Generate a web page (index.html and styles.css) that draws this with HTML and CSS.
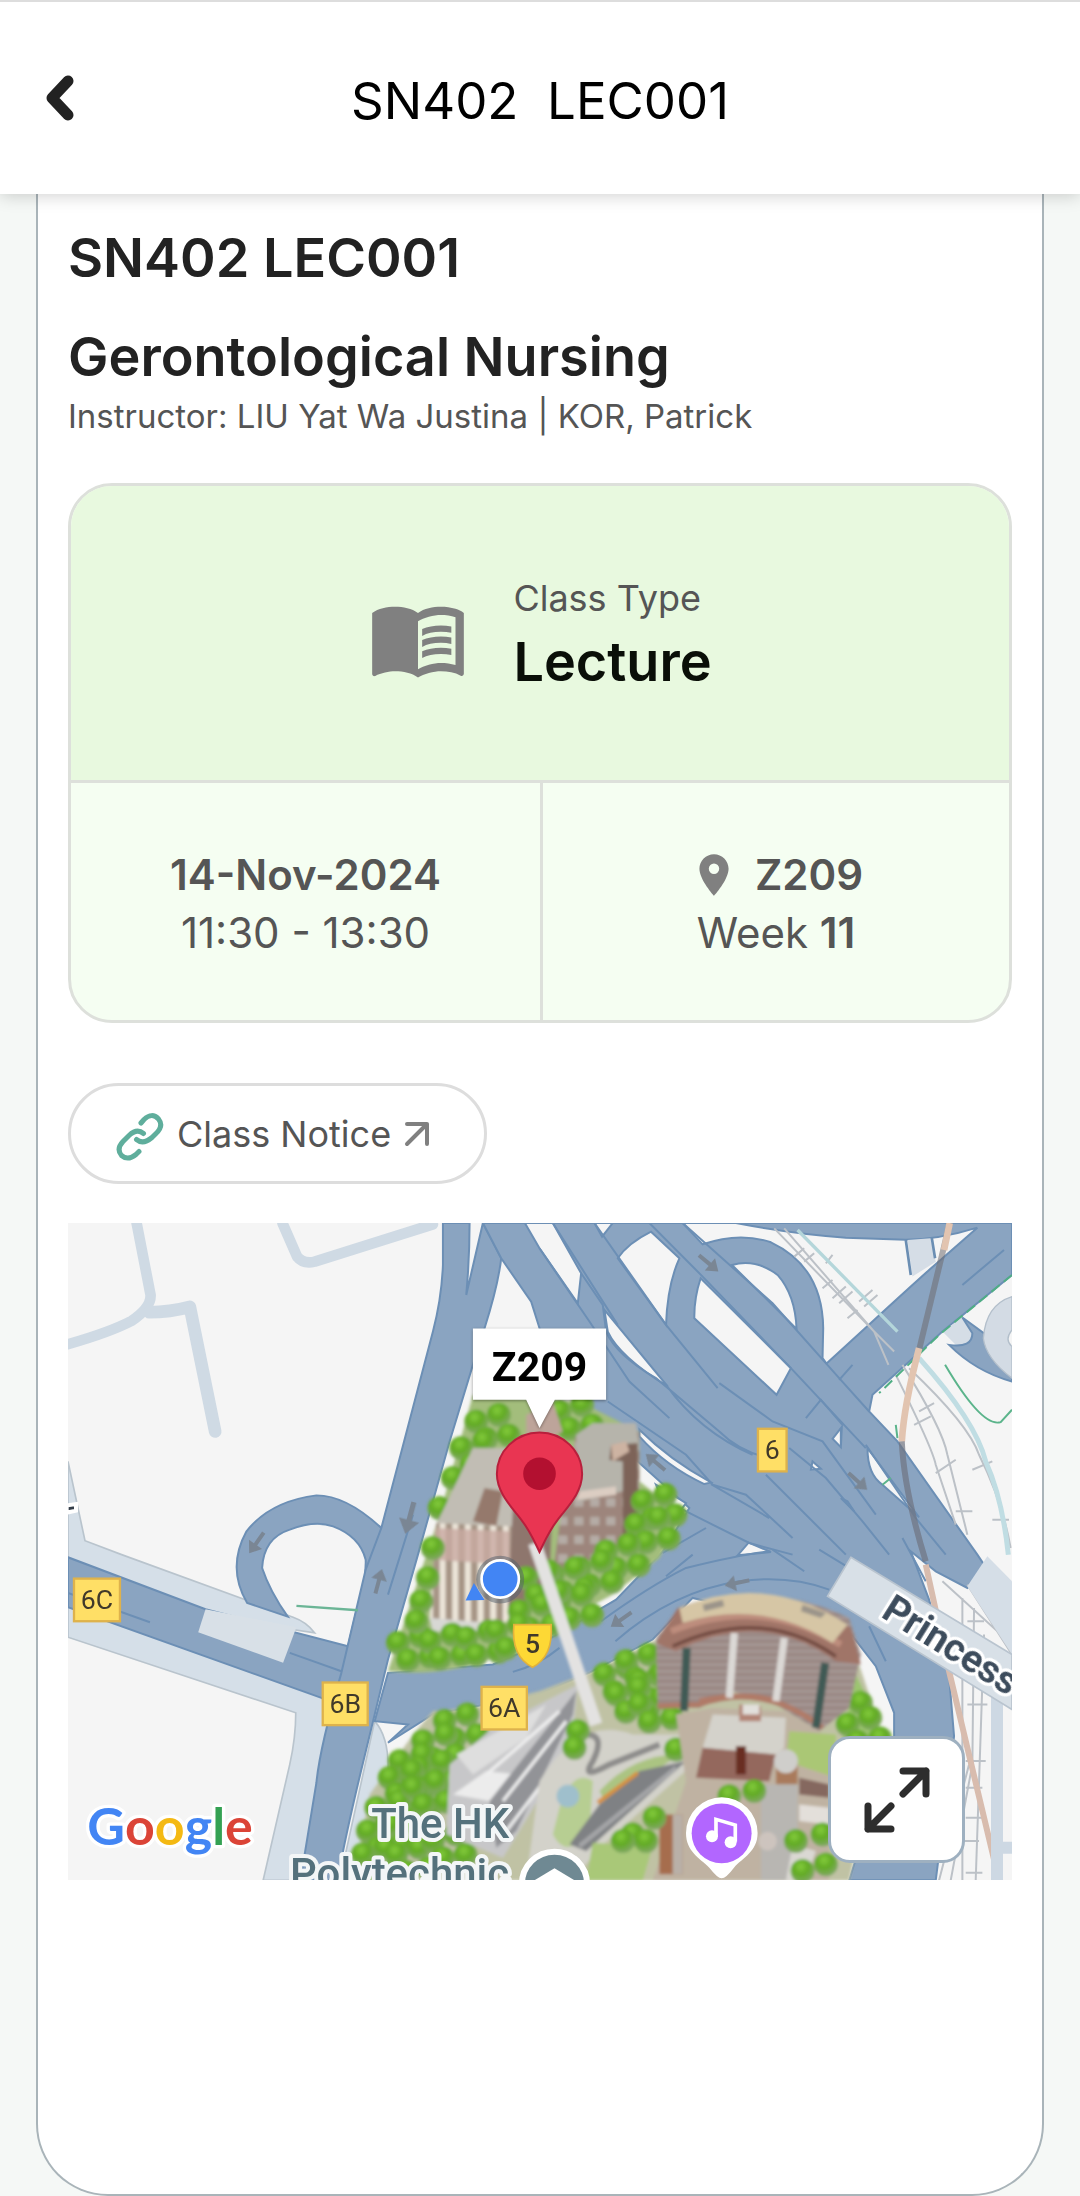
FILE: index.html
```html
<!DOCTYPE html>
<html lang="en">
<head>
    <meta charset="UTF-8">
    <meta name="viewport" content="width=device-width, initial-scale=1.0">
    <title>SN402 LEC001</title>
    <link rel="stylesheet" href="styles.css">
</head>
<body>

    <header class="topbar">
        <button class="back" type="button" aria-label="Back">
            <svg viewBox="0 0 30 46"><path d="M23 6 L7 23 L23 40"/></svg>
        </button>
        <div class="topbar-title">SN402&nbsp; LEC001</div>
    </header>

    <main class="sheet">
        <h1>SN402 LEC001</h1>
        <h2>Gerontological Nursing</h2>
        <p class="instructor">Instructor: LIU Yat Wa Justina | KOR, Patrick</p>

        <section class="info">
            <div class="info-type">
                <svg class="book" viewBox="0 0 24 24">
                    <path d="M21 5c-1.11-.35-2.33-.5-3.5-.5-1.95 0-4.05.4-5.5 1.5-1.45-1.1-3.55-1.5-5.5-1.5S2.45 4.9 1 6v14.65c0 .25.25.5.5.5.1 0 .15-.05.25-.05C3.1 20.45 5.05 20 6.5 20c1.95 0 4.05.4 5.5 1.5 1.35-.85 3.8-1.5 5.5-1.5 1.65 0 3.35.3 4.75 1.05.1.05.15.05.25.05.25 0 .5-.25.5-.5V6c-.6-.45-1.25-.75-2-1zm0 13.5c-1.1-.35-2.3-.5-3.5-.5-1.7 0-4.15.65-5.5 1.5V8c1.35-.85 3.8-1.5 5.5-1.5 1.2 0 2.4.15 3.5.5v11.5z"/>
                    <path d="M17.5 10.5c.88 0 1.73.09 2.5.26V9.24c-.79-.15-1.64-.24-2.5-.24-1.7 0-3.24.29-4.5.83v1.66c1.13-.64 2.7-.99 4.5-.99zM13 12.49v1.66c1.13-.64 2.7-.99 4.5-.99.88 0 1.73.09 2.5.26V11.9c-.79-.15-1.64-.24-2.5-.24-1.7 0-3.24.3-4.5.83zM17.5 14.33c-1.7 0-3.24.29-4.5.83v1.66c1.13-.64 2.7-.99 4.5-.99.88 0 1.73.09 2.5.26v-1.52c-.79-.16-1.64-.24-2.5-.24z"/>
                </svg>
                <div>
                    <div class="label">Class Type</div>
                    <div class="type-name">Lecture</div>
                </div>
            </div>
            <div class="info-cells">
                <div class="cell">
                    <div class="line"><strong>14-Nov-2024</strong></div>
                    <div class="line">11:30 - 13:30</div>
                </div>
                <div class="cell">
                    <div class="line">
                        <svg class="place" viewBox="0 0 24 24"><path d="M12 2C8.13 2 5 5.13 5 9c0 5.25 7 13 7 13s7-7.75 7-13c0-3.87-3.13-7-7-7zm0 9.5a2.5 2.5 0 0 1 0-5 2.5 2.5 0 0 1 0 5z"/></svg>
                        <strong>Z209</strong>
                    </div>
                    <div class="line">Week&nbsp;<strong>11</strong></div>
                </div>
            </div>
        </section>

        <a class="notice" href="#">
            <svg class="link-icon" viewBox="0 0 48 48">
                <path d="M25 10 L28 6.500 Q36 -1 42.500 6 Q48 13 40 20.500 L36 24.500 Q27 32 20.500 26.500"/>
                <path d="M27.500 20.500 Q21 15 13 22.500 L7 28.500 Q0 36 5.500 42.500 Q12 48 20 41.500 L23 38.500"/>
            </svg>
            <span>Class Notice</span>
            <svg class="out-icon" viewBox="0 0 26 26"><path d="M3 3 H23 V23 M23 3 L3 23"/></svg>
        </a>

        <div class="map">
            <svg class="map-canvas" viewBox="24 24 2835 1974">
                <defs>
                    <radialGradient id="leaf" cx="42%" cy="32%" r="65%">
                        <stop offset="0" stop-color="#84cc3c"/>
                        <stop offset=".5" stop-color="#62ab24"/>
                        <stop offset="1" stop-color="#7fa860"/>
                    </radialGradient>
                    <circle id="tree" r="36" fill="url(#leaf)"/>
                    <g id="grove">
                        <use href="#tree" x="0" y="0"/><use href="#tree" x="68" y="-20"/><use href="#tree" x="30" y="52"/><use href="#tree" x="98" y="42"/>
                    </g>
                    <path id="arrow" d="M-38 -6 H5 V-24 L38 0 L5 24 V6 H-38z" fill="#7a8694"/>
                    <pattern id="bricks" width="22" height="60" patternUnits="userSpaceOnUse">
                        <rect width="22" height="60" fill="#9a8884"/>
                        <path d="M0 10 H22 M0 30 H22 M0 50 H22" stroke="#aa9d9b" stroke-width="6"/>
                    </pattern>
                    <pattern id="piers" width="38" height="60" patternUnits="userSpaceOnUse">
                        <rect width="38" height="60" fill="#a69485"/>
                        <rect width="18" height="60" fill="#ece5d9"/>
                    </pattern>
                    <pattern id="windows" width="48" height="56" patternUnits="userSpaceOnUse">
                        <rect width="48" height="56" fill="#9d857b"/>
                        <rect x="8" y="10" width="28" height="26" fill="#b5aca6"/>
                    </pattern>
                    <filter id="soft" x="-5%" y="-5%" width="110%" height="110%"><feGaussianBlur stdDeviation="5"/></filter>
                </defs>

                <rect x="24" y="24" width="2835" height="1974" fill="#f5f5f5"/>

                <!-- side streets -->
                <g class="street">
                    <path d="M230 24 L272 240 Q274 278 215 318 Q150 352 24 388"/>
                    <path d="M268 292 Q330 292 390 276 L466 650" stroke-width="38"/>
                    <path d="M668 24 L712 125 Q730 148 765 140 L1120 28"/>
                </g>

                <!-- pavements and footbridges -->
                <g class="pavement">
                    <path d="M24 740 L75 978 L185 1020 L700 1208 Q740 1222 765 1255 L400 1200 L24 1040z"/>
                    <path d="M24 1160 L785 1440 L880 1500 L725 1998 H610 L690 1650 Q708 1570 708 1495 L24 1268z"/>
                    <path d="M945 1520 Q990 1570 985 1680 L900 1998 H840z"/>
                </g>
                <path d="M20 872 L48 868 V888 L20 894z" fill="#333d49" stroke="#fff" stroke-width="12"/>

                <!-- western roads -->
                <g class="road">
                    <path d="M24 1028 L437 1184 L865 1295 L840 1480 L785 1450 L24 1178z"/>
                    <path d="M965 940 Q860 842 770 842 Q630 860 560 950 Q500 1060 562 1165 L684 1206 Q630 1130 607 1060 Q612 970 690 945 Q765 915 820 935 Q900 965 918 1035 Q920 1110 890 1190 L865 1295 H980z"/>
                    <path d="M1150 24 V150 Q1146 250 1120 350 L965 940 L918 1065 L845 1375 Q780 1600 770 1705 L722 1998 H833 Q860 1850 910 1645 L985 1335 L1075 1020 L1170 680 L1240 450 L1275 340 Q1316 210 1325 130 L1270 24 L1220 240 Q1230 130 1230 24z"/>
                </g>
                <path d="M437 1184 L710 1238 L670 1345 L415 1253z" fill="#d8e0e7"/>

                <!-- interchange -->
                <path class="road" d="M1270 24 H2859 V180 L2650 350 L2440 540 L2430 590 L2515 680 L2755 1020 L2785 1065 L2725 1120 L2630 1070 L2555 1010 L2610 1155 L2670 1385 L2685 1565 L2630 1998 H2370 L2505 1565 V1495 L2450 1355 L2380 1265 L1900 1150 L1780 1275 L1590 1375 L1440 1440 L1120 1500 L985 1585 L1045 1530 L945 1520 L985 1375 L1300 1350 L1440 1290 L1670 1155 L1810 1010 L1890 880 L1740 745 L1560 570 L1440 340 L1415 260 L1325 130z"/>
                <g transform="translate(1440 0)">
                    <g class="island">
                        <path d="M-44 24 H40 L125 175 L115 265 L0 100z"/>
                        <path d="M165 24 H220 L188 65z"/>
                        <path d="M235 130 Q265 85 335 50 L420 130 Q384 210 380 330z"/>
                        <path d="M484 190 L755 460 L712 540 L465 310 Q464 250 484 190z"/>
                        <path d="M578 150 Q650 130 715 180 Q768 240 772 342z"/>
                        <path d="M430 24 L490 88 Q600 50 695 82 Q850 155 852 340 L850 430 L862 446 L1000 320 Q1070 255 1170 165 L1315 38 Q1200 74 1100 74 L920 68 Q750 55 590 24z"/>
                        <path d="M195 285 L385 515 Q240 425 205 350z"/>
                        <path d="M300 645 Q390 735 515 803 L495 808 Q380 755 300 665z"/>
                        <path d="M880 672 L908 636 L905 697z"/>
                        <path d="M815 765 L820 740 L845 762z"/>
                        <path d="M985 700 L1140 908 L1030 810 Q985 780 985 700z"/>
                        <path d="M905 850 L925 860 L945 890z"/>
                        <path d="M595 1022 L628 984 L695 1012z"/>
                        <path d="M440 865 L350 810 L380 880 L400 920z"/>
                    </g>
                    <g class="seam">
                        <path d="M40 24 L235 330 M165 24 L380 330 L535 520 M330 24 L490 185 L755 460 L980 700 M430 24 L700 265 L900 490 L990 590 M0 100 L150 320 L270 500 L390 610"/>
                        <path d="M125 175 L190 270 L200 350 Q230 420 350 490 L540 650 Q600 710 690 730 M380 510 Q480 650 640 720 M540 505 L700 620 L850 680 L1010 900"/>
                        <path d="M205 560 L440 720 L520 810 L620 840 L760 970 M515 808 L690 910 M680 780 L920 1020 M750 700 L860 790 L970 920 L1050 1020 M800 610 L845 555 L910 630 M905 640 V690 M980 690 L1130 910 L1220 1020 M900 495 L940 450 M1270 210 L1395 105 M430 885 L630 985 L760 1020 M370 1015 L500 940"/>
                        <path d="M185 1220 Q330 1115 440 1060 Q600 1020 690 1010 M228 1280 Q400 1130 600 1100 Q750 1080 870 1125 M380 1085 L460 1020 M990 1235 L1040 1340 M700 1005 L795 1070 M840 1005 L930 1060 M1090 970 L1160 1100"/>
                    </g>
                    <g fill="#d5dde6">
                        <path d="M1105 75 L1175 70 L1190 140 L1120 185z"/>
                        <path d="M1210 350 L1270 308 Q1310 340 1300 375 Q1280 405 1250 390z"/>
                    </g>
                    <path d="M1100 75 L1115 180 M1178 68 L1188 130" stroke="#6b8eb3" stroke-width="8"/>
                    <path class="road" d="M1270 308 L1355 370 L1419 480 V500 Q1310 470 1230 390 Q1300 400 1300 355z"/>
                    <path d="M1419 245 Q1340 270 1333 370 Q1340 430 1419 490 V395 Q1395 375 1419 345z" fill="#d3dbe4" stroke="#b3bfcb" stroke-width="4"/>

                    <!-- railway -->
                    <g class="rail">
                        <path d="M705 40 L1005 350 L1065 410 M735 40 L1005 350 L1048 450 M1070 480 Q1180 700 1190 750 L1250 930 M1090 450 Q1210 640 1225 720 L1285 960 M1110 460 Q1290 630 1320 720 Q1390 860 1415 1000"/>
                        <path d="M765 125 l30 -25 M795 140 l30 -25 M850 220 l30 -25 M880 250 l40 -35 M900 265 l40 -35 M925 310 l30 -25 M860 145 l20 -25 M960 260 l40 -35 M975 275 l40 -35 M1125 630 l50 -25 M1140 590 l45 -25 M1190 775 l60 -40 M1300 765 l60 -25 M1250 890 h50 M1360 915 h50"/>
                        <path d="M1270 1150 V1998 M1305 1180 L1300 1650 L1235 1998 M1335 1260 L1310 1998 M1200 1998 L1290 1650 M1210 1100 L1419 1290 M1285 1110 L1419 1320" />
                        <path d="M1285 1220 h50 M1280 1360 h60 M1285 1470 h60 M1280 1640 h60 M1280 1720 h50 M1280 1810 h60 M1270 1880 h50 M1280 1975 h50"/>
                    </g>
                    <g fill="none">
                        <path d="M775 45 L1075 350" stroke="#b4d6da" stroke-width="10"/>
                        <path d="M1140 430 Q1310 620 1340 740 Q1390 850 1408 1020" stroke="#c0dde3" stroke-width="15"/>
                        <path d="M1419 180 L1200 360 L1020 535" stroke="#4fae84" stroke-width="6" stroke-dasharray="32 16"/>
                        <path d="M1218 450 Q1330 640 1385 622 L1419 585 M1070 630 L1075 670 M1030 810 L1055 790" stroke="#5bb48b" stroke-width="6"/>
                        <path d="M1232 24 L1140 405" stroke="#6f6b70" stroke-opacity=".55" stroke-width="18"/>
                        <path d="M1232 24 L1215 105 M1140 400 Q1095 570 1088 680" stroke="#e2c4b0" stroke-width="20"/>
                        <path d="M1088 680 Q1095 830 1160 1040" stroke="#6f7380" stroke-opacity=".7" stroke-width="18"/>
                        <path d="M1160 1050 L1230 1370 L1380 1998" stroke="#d8bcae" stroke-width="18"/>
                    </g>
                    <path d="M1345 1025 L1419 1100 V1320 L1285 1115z" fill="#d5dee7"/>
                    <path d="M1374 1440 V1998 M1384 1900 H1419" stroke="#cdd8e3" stroke-width="36"/>
                    <path d="M935 1028 L1419 1320 V1485 L865 1145z" fill="#d8e0e7" stroke="#b9c4cf" stroke-width="5"/>
                </g>

                <path d="M710 1174 L895 1187" stroke="#6bb596" stroke-width="7"/>
                <path class="seam" d="M24 1135 L270 1223 M690 1315 L845 1370 M1060 900 L985 1140 M1360 1372 Q1440 1350 1500 1300"/>

                <!-- campus imagery -->
                <g filter="url(#soft)">
                    <path d="M1240 540 L1560 560 L1740 650 L1740 800 L1870 900 L1800 1030 L1660 1140 L1480 1235 L1330 1320 Q1160 1390 985 1370 L1140 900z" fill="#a3bd7c"/>
                    <use href="#grove" x="1250" y="620"/><use href="#grove" x="1500" y="590"/><use href="#grove" x="1205" y="700"/><use href="#tree" x="1180" y="790"/><use href="#tree" x="1140" y="880"/>
                    <path d="M1240 700 H1340 L1470 790 L1380 1000 L1310 1215 H1110 L1130 930z" fill="#c1bdb4"/>
                    <path d="M1275 820 L1330 830 L1310 935 L1240 920z" fill="#95796c"/>
                    <path d="M1130 925 L1360 935 L1400 1200 L1300 1235 L1110 1210z" fill="url(#piers)"/>
                    <path d="M1360 880 L1480 840 L1470 1110 L1375 1215 L1345 1180z" fill="#8e766d"/>
                    <path d="M1128 940 L1350 950 V1050 L1115 1035z" fill="#c9aaa1" fill-opacity=".8"/>
                    <path d="M1110 1210 L1290 1225 L1280 1250 H1120z" fill="#d8d8d4"/>
                    <path d="M1400 600 L1480 560 L1510 650 L1400 700z" fill="#bda49a"/>
                    <path d="M1550 660 L1740 650 V910 L1680 1000 L1480 1080 L1510 850z" fill="url(#windows)"/>
                    <path d="M1550 660 L1600 625 H1730 L1740 700 L1690 830 L1560 860z" fill="#b6b4ab"/>
                    <path d="M1655 690 L1735 685 V960 L1690 980 V740 L1650 735z" fill="#7d6358"/>
                    <path d="M1655 690 L1700 680 L1710 710 L1660 740z" fill="#cdb3a2"/>
                    <path d="M1560 830 L1670 815 V840 L1550 855z" fill="#dccdc2"/>

                    <use href="#grove" x="1750" y="860"/><use href="#grove" x="1730" y="930"/><use href="#grove" x="1640" y="1010"/><use href="#grove" x="1560" y="1060"/><use href="#grove" x="1480" y="1080"/><use href="#grove" x="1500" y="1160"/><use href="#grove" x="1400" y="1090"/><use href="#grove" x="1380" y="1190"/>
                    <use href="#grove" x="1015" y="1285"/><use href="#grove" x="1110" y="1280"/><use href="#grove" x="1220" y="1270"/><use href="#grove" x="1310" y="1250"/><use href="#tree" x="1085" y="1160"/><use href="#tree" x="1105" y="1090"/><use href="#tree" x="1120" y="1000"/><use href="#tree" x="1070" y="1220"/>

                    <!-- southern half of the campus -->
                    <path d="M1120 1490 L1240 1480 L1440 1430 L1600 1370 L1780 1280 L1900 1230 H2360 L2400 1350 L2450 1500 L2470 1570 L2370 1998 H880 L930 1740 L1060 1560z" fill="#c0c2a4"/>
                    <use href="#grove" x="1155" y="1520"/><use href="#grove" x="1090" y="1580"/><use href="#grove" x="1020" y="1640"/><use href="#grove" x="1080" y="1660"/><use href="#grove" x="990" y="1690"/><use href="#grove" x="1010" y="1740"/><use href="#grove" x="950" y="1780"/><use href="#grove" x="1060" y="1720"/><use href="#grove" x="925" y="1850"/><use href="#grove" x="910" y="1920"/><use href="#grove" x="1010" y="1920"/><use href="#grove" x="1120" y="1880"/>
                    <path d="M1170 1650 L1300 1540 L1555 1410 L1540 1560 L1440 1750 L1330 1930 L1160 1860z" fill="#c7c7c9"/>
                    <path d="M1180 1740 L1280 1670 L1380 1680 L1290 1760z" fill="#ececec"/>
                    <path d="M1190 1620 L1460 1470 L1400 1570 L1240 1680z" fill="#dedede"/>
                    <path d="M1290 1760 L1550 1430 L1540 1500 L1370 1850 L1310 1900z" fill="#929397"/>
                    <path d="M1280 1680 L1500 1490 M1330 1760 L1520 1520 M1340 1850 L1500 1640" stroke="#f0f0f0" stroke-width="10"/>
                    <path d="M1440 1700 Q1560 1500 1720 1560 L1900 1560 V1650 L1620 1900 L1540 1998 H1400z" fill="#d3d2ca"/>
                    <path d="M1500 1780 Q1540 1660 1600 1700 L1590 1850 Q1520 1940 1480 1860z" fill="#b7ce92"/>
                    <circle cx="1525" cy="1745" r="34" fill="#9fbfcc"/>
                    <path d="M1620 1730 Q1720 1620 1860 1620 L1640 1770z" fill="#abc482"/>
                    <path d="M1620 1770 Q1720 1690 1740 1670 L1880 1640 L1580 1910 L1530 1890z" fill="#7f8184"/>
                    <path d="M1560 1895 L1850 1660" stroke="#a5a6a8" stroke-width="14"/>
                    <path d="M1615 1765 L1735 1675" stroke="#d8913f" stroke-width="12"/>
                    <path d="M1580 1560 Q1640 1560 1600 1640 Q1560 1700 1650 1650 L1800 1590" fill="none" stroke="#8d8c8b" stroke-width="18"/>
                    <path d="M1600 1885 L1780 1895 L1750 1998 H1580z" fill="#a9c878"/>
                    <use href="#grove" x="1635" y="1380"/><use href="#grove" x="1700" y="1340"/><use href="#grove" x="1740" y="1400"/><use href="#grove" x="1670" y="1440"/><use href="#grove" x="1740" y="1470"/><use href="#tree" x="1555" y="1550"/><use href="#tree" x="1545" y="1600"/><use href="#tree" x="1850" y="1605"/>
                    <path d="M1425 985 L1610 1530" stroke="#e3e2e1" stroke-width="38"/>

                    <!-- auditorium -->
                    <path d="M2390 1380 L2450 1500 L2470 1570 L2350 1570z" fill="#9cc470"/>
                    <use href="#tree" x="2405" y="1465"/><use href="#grove" x="2365" y="1530"/>
                    <path d="M1790 1270 L1860 1180 Q2120 1090 2370 1210 L2405 1320 L2370 1480 L2280 1550 L2150 1470 L2020 1430 L1920 1480 L1795 1475z" fill="url(#bricks)"/>
                    <path d="M1795 1475 L1920 1470 Q2110 1400 2290 1540 M1920 1460 Q2060 1430 2150 1460" fill="none" stroke="#b07a68" stroke-width="16"/>
                    <path d="M1790 1285 L1855 1180 Q2110 1080 2375 1240 L2405 1350 L2330 1340 Q2110 1180 1850 1310z" fill="#a07468"/>
                    <path d="M1835 1250 Q2100 1140 2345 1290" fill="none" stroke="#bd8d7d" stroke-width="20"/>
                    <path d="M1840 1295 Q2110 1170 2330 1325" fill="none" stroke="#6f4a41" stroke-width="10"/>
                    <path d="M1860 1180 Q2120 1070 2365 1230 L2320 1285 Q2110 1150 1870 1225z" fill="#d6c6a5"/>
                    <path d="M1930 1170 L1990 1155 L1995 1175 L1935 1190z M2230 1170 L2300 1195 L2285 1210 L2225 1190z" fill="#9b948a"/>
                    <path d="M1882 1300 L1874 1490 M2298 1345 L2270 1540" stroke="#3f5a55" stroke-width="24"/>
                    <path d="M2025 1255 L2010 1450 M2175 1270 L2150 1460" stroke="#dcd9d6" stroke-width="22"/>

                    <!-- lower buildings -->
                    <path d="M1850 1500 L1960 1480 L2180 1490 L2310 1570 V1998 H1780 L1880 1700z" fill="#bfb2a2"/>
                    <path d="M2190 1550 L2330 1560 V1690 L2180 1640z" fill="#aac774"/>
                    <path d="M1960 1500 L2180 1510 L2175 1600 L2150 1620 L1930 1600z" fill="#d4d2cb"/>
                    <path d="M2040 1470 L2105 1475 V1520 H2040z" fill="#b28476"/><path d="M2050 1470 h50 v30 h-50z" fill="#e2e0dc"/>
                    <path d="M1930 1600 L2150 1620 L2130 1700 L1910 1690z" fill="#94685d"/>
                    <path d="M2030 1595 h30 v85 h-30z" fill="#692d24"/>
                    <path d="M2150 1640 h65 v70 h-65z" fill="#a97a5b"/><circle cx="2180" cy="1640" r="36" fill="#cfcecb"/>
                    <path d="M2105 1710 h110 v288 h-110z" fill="#b8b6b2"/>
                    <path d="M2220 1690 L2310 1710 V1750 L2220 1740z" fill="#85685f"/>
                    <path d="M2220 1770 L2310 1780 V1830 L2220 1820z" fill="#e3dfda"/>
                    <path d="M1800 1800 h70 v180 h-70z" fill="#a66d4e"/><path d="M1840 1800 h30 v180 h-30z" fill="#b9b0a8"/>
                    <circle cx="2125" cy="1880" r="28" fill="#cdc4be"/>
                    <path d="M2200 1890 L2270 1910 L2240 1998 H2180z" fill="#dad8d3"/>
                    <use href="#tree" x="1720" y="1860"/><use href="#tree" x="1760" y="1880"/><use href="#tree" x="1690" y="1880"/><use href="#tree" x="1785" y="1810"/><use href="#tree" x="2010" y="1745"/><use href="#tree" x="2085" y="1730"/><use href="#tree" x="2210" y="1880"/><use href="#tree" x="2290" y="1860"/><use href="#tree" x="2230" y="1970"/><use href="#tree" x="2300" y="1950"/>
                </g>

                <!-- traffic directions -->
                <use href="#arrow" transform="translate(1050 910) rotate(105) scale(1.3)"/>
                <use href="#arrow" transform="translate(590 985) rotate(125)"/>
                <use href="#arrow" transform="translate(957 1100) rotate(-75)"/>
                <use href="#arrow" transform="translate(1948 145) rotate(40)"/>
                <use href="#arrow" transform="translate(2396 800) rotate(42)"/>
                <use href="#arrow" transform="translate(1788 742) rotate(220)"/>
                <use href="#arrow" transform="translate(2033 1105) rotate(168)"/>
                <use href="#arrow" transform="translate(1685 1215) rotate(145)"/>

                <!-- road numbers -->
                <g class="shield">
                    <rect x="2096" y="642" width="86" height="128"/><text x="2139" y="733">6</text>
                    <rect x="42" y="1092" width="138" height="128"/><text x="111" y="1184">6C</text>
                    <rect x="789" y="1404" width="135" height="128"/><text x="857" y="1496">6B</text>
                    <rect x="1266" y="1417" width="136" height="128"/><text x="1334" y="1508">6A</text>
                    <path d="M1363 1230 H1475 Q1482 1325 1419 1358 Q1354 1325 1363 1230z" fill="#fdd835" stroke="#e2b23a" stroke-width="5"/><text class="route" x="1419" y="1315">5</text>
                </g>

                <!-- labels -->
                <text class="street-name" transform="translate(2462 1205) rotate(32)">Princess</text>
                <text class="campus-name" x="1349" y="1870">The HK</text>
                <text class="campus-name" x="1349" y="2020">Polytechnic</text>
                <g>
                    <circle cx="1485" cy="2010" r="98" fill="#6f8993" stroke="#fff" stroke-width="18"/>
                    <path d="M1425 1998 L1485 1962 L1545 1998z" fill="#fff"/>
                </g>
                <g>
                    <path d="M1987 1992 Q1975 1992 1950 1960 C1920 1930 1880 1912 1880 1856 A107 107 0 0 1 2095 1856 C2095 1912 2050 1930 2024 1960 Q2000 1992 1987 1992z" fill="#fff"/>
                    <circle cx="1987" cy="1857" r="90" fill="#b266ff"/>
                    <path d="M1970 1866 V1815 L2028 1832 V1882" fill="none" stroke="#fff" stroke-width="11"/>
                    <circle cx="1958" cy="1866" r="18" fill="#fff"/><circle cx="2014" cy="1884" r="18" fill="#fff"/>
                </g>

                <!-- current location -->
                <circle cx="1322" cy="1095" r="72" fill="#53606b" fill-opacity=".5"/>
                <path d="M1243 1105 L1218 1158 L1275 1156z" fill="#4285f4"/>
                <circle cx="1322" cy="1093" r="56" fill="#4285f4" stroke="#fff" stroke-width="8"/>

                <!-- room marker -->
                <path d="M1440 1012 C1420 970 1412 950 1385 915 C1350 870 1312 830 1312 778 A128 125 0 0 1 1568 778 C1568 830 1530 870 1495 915 C1468 950 1460 970 1440 1012z" fill="#e93552" stroke="#b81f3c" stroke-width="6"/>
                <circle cx="1440" cy="777" r="49" fill="#b31030"/>
                <path class="bubble" d="M1240 341 H1640 V555 H1486 L1440 640 L1400 555 H1240z"/>
                <text class="bubble-text" x="1440" y="498">Z209</text>

                <text class="google" x="82" y="1891"><tspan fill="#4285f4">G</tspan><tspan fill="#db4437">o</tspan><tspan fill="#f4b913">o</tspan><tspan fill="#4285f4">g</tspan><tspan fill="#34a153">l</tspan><tspan fill="#db4437">e</tspan></text>
            </svg>

            <button class="expand" type="button" aria-label="Expand map">
                <svg viewBox="0 0 66 66"><path d="M39 4 H62 V27 M62 4 L39 27 M4 39 V62 H27 M4 62 L27 39"/></svg>
            </button>
        </div>
    </main>

</body>
</html>
```
FILE: styles.css
```css
* {
    box-sizing: border-box;
}

body {
    margin: 0;
    min-height: 100vh;
    display: flex;
    flex-direction: column;
    background: #f5f8f6;
    font-family: "Inter", "Roboto", sans-serif;
    font-optical-sizing: none;
    color: #555;
}

/* header */
.topbar {
    display: grid;
    grid-template-columns: 120px 1fr 120px;
    align-items: center;
    height: 194px;
    padding-top: 6px;
    border-top: 2px solid #ddd;
    background: #fff;
    box-shadow: 0 2px 16px rgba(0, 0, 0, 0.18);
    position: relative;
}

.back {
    justify-self: start;
    padding: 0 45px 6px;
    border: none;
    background: none;
    cursor: pointer;
}

.back svg {
    display: block;
    width: 30px;
    height: 46px;
    fill: none;
    stroke: #222;
    stroke-width: 11;
    stroke-linecap: round;
    stroke-linejoin: round;
}

.topbar-title {
    text-align: center;
    font-size: 51px;
    line-height: 60px;
    color: #000;
}

/* white sheet */
.sheet {
    flex: 1;
    margin: 0 36px;
    padding: 34px 30px 60px;
    border: 2px solid #a9b4b9;
    border-top: none;
    border-radius: 0 0 72px 72px;
    background: #fff;
}

h1,
h2 {
    margin: 0;
    font-size: 54px;
    line-height: 60px;
    font-weight: 600;
    color: #222;
}

h2 {
    margin-top: 39px;
}

.instructor {
    margin: 7px 0 45px;
    font-size: 33px;
    line-height: 44px;
}

/* class info card */
.info {
    border: 3px solid #dde0db;
    border-radius: 44px;
    background: #f5fef2;
    overflow: hidden;
}

.info-type {
    display: flex;
    justify-content: center;
    align-items: flex-end;
    gap: 45px;
    padding: 88px 0;
    border-bottom: 3px solid #dde0db;
    background: #e8f9df;
}

.book {
    width: 100px;
    height: 100px;
    margin-bottom: 4px;
    fill: #808080;
}

.label {
    font-size: 36px;
    line-height: 48px;
}

.type-name {
    margin-top: 10px;
    font-size: 54px;
    line-height: 60px;
    font-weight: 600;
    color: #0a0f08;
}

.info-cells {
    display: grid;
    grid-template-columns: 1fr 1fr;
}

.cell {
    padding: 63px 0 58px;
}

.cell + .cell {
    border-left: 3px solid #dde0db;
}

.line {
    display: flex;
    justify-content: center;
    align-items: center;
    font-size: 42px;
    line-height: 58px;
}

strong {
    font-weight: 600;
}

.place {
    width: 50px;
    height: 50px;
    margin-right: 16px;
    fill: #808080;
}

/* class notice link */
.notice {
    display: flex;
    align-items: center;
    width: fit-content;
    height: 101px;
    margin: 60px 0 39px;
    padding: 0 54px 0 45px;
    border: 3px solid #ddd;
    border-radius: 51px;
    font-size: 36px;
    color: #555;
    text-decoration: none;
}

.link-icon {
    width: 48px;
    height: 48px;
    margin: 6px 13px 0 0;
    fill: none;
    stroke: #5fae9c;
    stroke-width: 5;
    stroke-linecap: round;
}

.out-icon {
    width: 26px;
    height: 26px;
    margin-left: 13px;
    fill: none;
    stroke: #808080;
    stroke-width: 4;
    stroke-linecap: round;
    stroke-linejoin: round;
}

/* map */
.map {
    position: relative;
}

.map-canvas {
    display: block;
    width: 100%;
    font-family: "Roboto", sans-serif;
}

.street {
    fill: none;
    stroke: #cfdae4;
    stroke-width: 32;
    stroke-linecap: round;
    stroke-linejoin: round;
}

.pavement {
    fill: #d5dfe8;
    stroke: #b9c4cd;
    stroke-width: 5;
}

.road {
    fill: #8aa4c1;
    stroke: #6c8fb5;
    stroke-width: 6;
}

.island {
    fill: #f5f5f5;
    stroke: #6c8fb5;
    stroke-width: 6;
}

.seam {
    fill: none;
    stroke: #6c8fb5;
    stroke-width: 6;
}

.rail {
    fill: none;
    stroke: #bcc1c7;
    stroke-width: 6;
}

.shield rect {
    fill: #ffdf66;
    stroke: #deb24c;
    stroke-width: 7;
}

.shield text {
    font-size: 80px;
    text-anchor: middle;
    fill: #40392a;
}

.shield .route {
    font-weight: 500;
}

.street-name {
    font-size: 116px;
    font-weight: 700;
    fill: #3d4c5c;
    stroke: #fff;
    stroke-width: 20;
    stroke-linejoin: round;
    paint-order: stroke;
}

.campus-name {
    font-size: 126px;
    font-weight: 500;
    text-anchor: end;
    fill: #54717c;
    stroke: #f3f6f7;
    stroke-width: 24;
    stroke-linejoin: round;
    paint-order: stroke;
}

.bubble {
    fill: #fff;
    filter: drop-shadow(0 3px 4px rgba(0, 0, 0, 0.4));
}

.bubble-text {
    font-size: 123px;
    font-weight: 700;
    text-anchor: middle;
    fill: #000;
}

.google {
    font-family: "Lato", sans-serif;
    font-size: 156px;
    font-weight: 700;
    stroke: #fff;
    stroke-width: 20;
    stroke-linejoin: round;
    paint-order: stroke;
}

.expand {
    position: absolute;
    right: 47px;
    bottom: 17px;
    display: flex;
    align-items: center;
    justify-content: center;
    width: 137px;
    height: 127px;
    padding: 0;
    border: 3px solid #9eb0c0;
    border-radius: 22px;
    background: #fff;
    cursor: pointer;
}

.expand svg {
    width: 66px;
    height: 66px;
    fill: none;
    stroke: #2d2d2d;
    stroke-width: 7;
    stroke-linecap: round;
    stroke-linejoin: round;
}
```
